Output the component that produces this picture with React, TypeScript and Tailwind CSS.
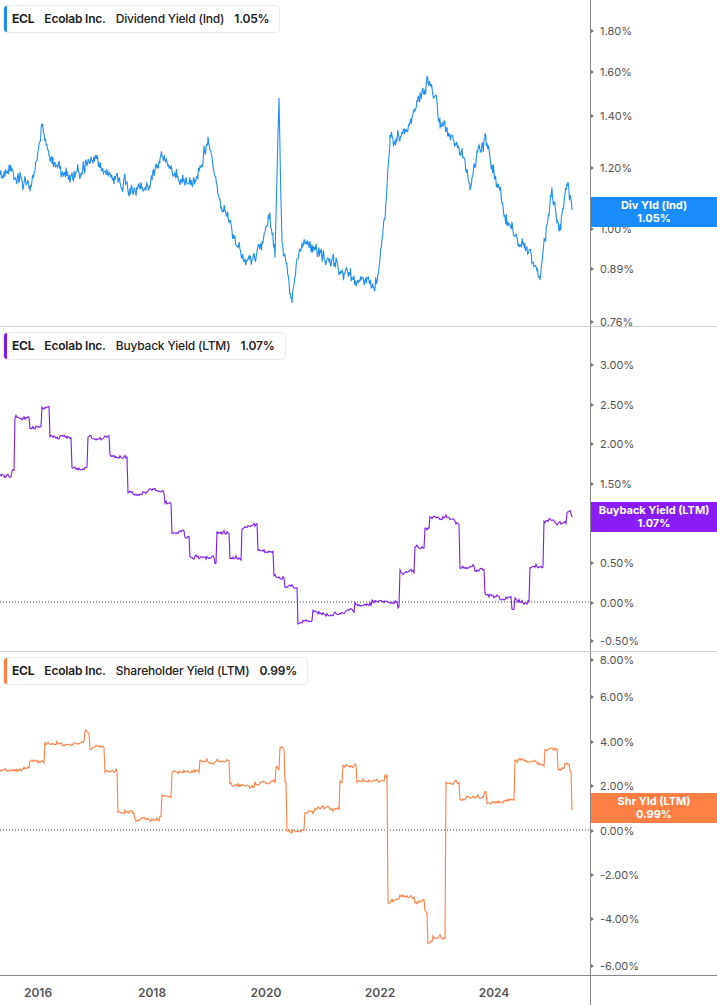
import React from "react";

type Pt = [number, number];

function rng(seed: number) {
  let s = seed;
  return () => {
    s = (s * 16807) % 2147483647;
    return s / 2147483647;
  };
}

function buildPath(keys: Pt[], noise: number, seed: number, stepped: boolean) {
  const r = rng(seed);
  const out: string[] = [];
  let drift = 0;
  for (let i = 0; i < keys.length - 1; i++) {
    const [x0, y0] = keys[i];
    const [x1, y1] = keys[i + 1];
    for (let x = x0; x < x1; x += stepped ? 1 : 0.7) {
      const t = (x - x0) / (x1 - x0);
      let y = stepped ? y0 : y0 + (y1 - y0) * t;
      drift = drift * 0.8 + (r() - 0.5) * noise;
      y += drift + (r() - 0.5) * noise;
      out.push(`${out.length ? "L" : "M"}${x.toFixed(1)},${y.toFixed(1)}`);
    }
  }
  const last = keys[keys.length - 1];
  out.push(`L${last[0]},${last[1]}`);
  return out.join(" ");
}

const div: Pt[] = [[0,180],[20,170],[30,190],[42,125],[50,160],[70,175],[95,160],[120,185],[150,185],[160,150],[175,180],[195,180],[208,135],[220,200],[235,240],[245,265],[260,250],[270,215],[275,255],[279,95],[282,240],[292,295],[300,245],[320,260],[340,270],[360,285],[375,290],[385,220],[390,140],[405,130],[420,100],[428,82],[440,120],[460,150],[470,185],[485,135],[495,175],[505,220],[520,240],[540,268],[552,190],[560,230],[568,185],[572,210]];
const buy: Pt[] = [[0,150],[12,145],[15,90],[30,100],[42,80],[50,110],[72,140],[88,110],[110,130],[128,165],[165,175],[172,205],[185,210],[190,230],[215,235],[217,205],[230,230],[242,200],[258,225],[274,250],[285,260],[298,295],[313,285],[355,278],[372,275],[398,280],[400,245],[415,220],[425,200],[430,190],[455,195],[460,240],[475,245],[485,270],[500,272],[512,285],[515,275],[528,275],[530,240],[542,240],[544,195],[560,195],[567,185],[572,190]];
const shr: Pt[] = [[0,118],[30,110],[45,90],[60,92],[85,80],[90,95],[105,120],[118,160],[135,168],[160,165],[162,145],[172,120],[200,110],[230,135],[255,130],[276,115],[280,95],[285,130],[287,178],[300,178],[305,160],[315,155],[330,158],[340,130],[343,115],[355,112],[357,130],[385,125],[388,250],[400,245],[415,250],[425,260],[428,290],[433,285],[445,285],[446,130],[460,145],[485,140],[487,150],[500,150],[515,110],[530,110],[545,95],[558,115],[565,112],[570,120],[572,158]];

type Panel = {
  h: number;
  name: string;
  value: string;
  color: string;
  path: string;
  ticks: [string, number][];
  zero?: number;
  tag: string;
  tagY: number;
  tagBg: string;
};

const panels: Panel[] = [
  { h: 326, name: "Dividend Yield (Ind)", value: "1.05%", color: "#1f8ef1", path: buildPath(div, 9, 11, false),
    ticks: [["1.80%",30],["1.60%",71],["1.40%",115],["1.20%",167],["1.00%",228],["0.89%",268],["0.76%",321]],
    tag: "Div Yld (Ind)", tagY: 197, tagBg: "bg-[#1a8cff]" },
  { h: 325, name: "Buyback Yield (LTM)", value: "1.07%", color: "#7c1cf2", path: buildPath(buy, 2.5, 23, true),
    ticks: [["3.00%",37],["2.50%",77],["2.00%",116],["1.50%",156],["1.00%",195],["0.50%",235],["0.00%",275],["-0.50%",313]],
    zero: 275, tag: "Buyback Yield (LTM)", tagY: 175, tagBg: "bg-[#8a1cf5]" },
  { h: 324, name: "Shareholder Yield (LTM)", value: "0.99%", color: "#ff7f45", path: buildPath(shr, 2.5, 37, true),
    ticks: [["8.00%",7],["6.00%",44],["4.00%",89],["2.00%",133],["0.00%",178],["-2.00%",222],["-4.00%",266],["-6.00%",313]],
    zero: 178, tag: "Shr Yld (LTM)", tagY: 141, tagBg: "bg-[#ff7f45]" },
];

function ChartPanel({ p, first }: { p: Panel; first: boolean }) {
  return (
    <div className={`flex ${first ? "" : "border-t border-[#cfcfcf]"}`} style={{ height: p.h }}>
      <div className="relative w-[590px] overflow-hidden">
        <div className="absolute left-[3px] top-[5px] z-10 flex items-center gap-[10px] rounded border border-[#ececec] bg-white py-[4px] pl-[8px] pr-[10px] text-[12px] tracking-[-0.2px] text-[#222]">
          <span className="absolute left-0 top-0 bottom-0 w-[3px] rounded-l" style={{ background: p.color }} />
          <span className="font-bold">ECL</span>
          <span className="font-semibold">Ecolab Inc.</span>
          <span className="font-medium">{p.name}</span>
          <span className="font-semibold">{p.value}</span>
        </div>
        <svg width="590" height={p.h} className="absolute inset-0">
          {p.zero !== undefined && (
            <line x1="0" x2="590" y1={p.zero} y2={p.zero} stroke="#444" strokeWidth="1" strokeDasharray="1 2" />
          )}
          <path d={p.path} fill="none" stroke={p.color} strokeWidth="1.1" />
        </svg>
      </div>
      <div className="relative flex-1 border-l border-[#888]">
        {p.ticks.map(([t, y]) => (
          <div key={t} className="absolute left-0 flex items-center text-[11px] text-[#555]" style={{ top: y - 7 }}>
            <span className="mr-[6px] h-0 w-0 border-y-[2px] border-l-[3px] border-y-transparent border-l-[#777]" />
            {t}
          </div>
        ))}
        <div className={`absolute left-0 right-0 flex h-[30px] flex-col items-center justify-center text-[11px] font-bold leading-[13px] text-white ${p.tagBg}`} style={{ top: p.tagY }}>
          <span>{p.tag}</span>
          <span>{p.value}</span>
        </div>
      </div>
    </div>
  );
}

export default function App() {
  const years = [["2016", 38], ["2018", 152], ["2020", 266], ["2022", 380], ["2024", 494]] as const;
  return (
    <div className="h-[1005px] w-[717px] overflow-hidden bg-white" style={{ fontFamily: "Inter, 'Noto Sans', sans-serif" }}>
      {panels.map((p, i) => (
        <ChartPanel key={p.name} p={p} first={i === 0} />
      ))}
      <div className="relative flex h-[30px] border-t border-[#888]">
        <div className="relative w-[590px]">
          {years.map(([y, x]) => (
            <span key={y} className="absolute top-[8px] -translate-x-1/2 text-[12px] font-semibold text-[#555]" style={{ left: x }}>
              {y}
            </span>
          ))}
        </div>
        <div className="flex-1 border-l border-[#888]" />
      </div>
    </div>
  );
}
